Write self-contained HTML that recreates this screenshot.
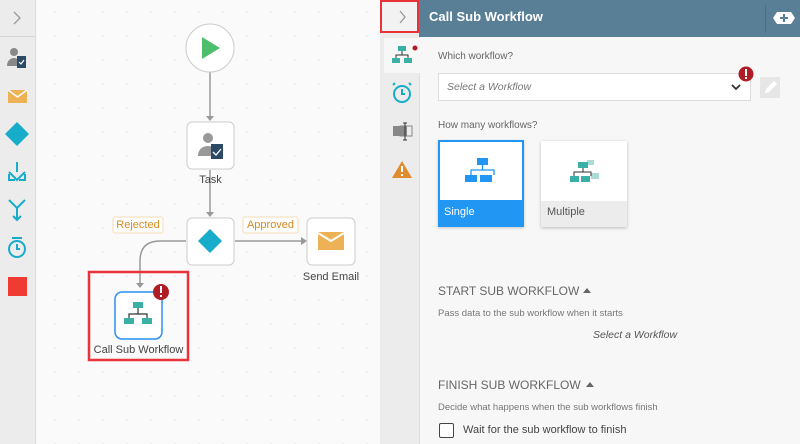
<!DOCTYPE html>
<html><head><style>
*{margin:0;padding:0;box-sizing:border-box}
body{width:800px;height:444px;overflow:hidden;font-family:"Liberation Sans",sans-serif;position:relative;background:#f7f7f7}
.a{position:absolute}
.t{position:absolute;font-size:11px;color:#555;white-space:nowrap}
</style></head><body>
<!-- left toolbar -->
<div class="a" style="left:0;top:0;width:36px;height:444px;background:#ececec;border-right:1px solid #ddd"></div>
<div class="a" style="left:0;top:36px;width:35px;height:1px;background:#d4d4d4"></div>
<svg class="a" style="left:0;top:0" width="36" height="444">
<path d="M14 12l6 6-6 6" stroke="#999" stroke-width="1.3" fill="none"/>
<circle cx="14" cy="52" r="4" fill="#888"/><path d="M7 66c0-6 4-8 7-8s6 2 7 8z" fill="#888"/>
<rect x="17" y="56" width="9" height="12" fill="#2c4a66"/><path d="M19 62l2 2 3-4" stroke="#fff" stroke-width="1.2" fill="none"/>
<path d="M8 90h19v13H8z" fill="#eeb256"/><path d="M8 90l9.5 7 9.5-7" stroke="#fff" stroke-width="1.5" fill="none"/>
<path d="M17 122l12 12-12 12-12-12z" fill="#17acc9"/>
<path d="M17 162v10M9 172l8 8 8-8M9 174v6h6M25 174v6h-6" stroke="#17acc9" stroke-width="2" fill="none"/>
<path d="M9 200l8 8 8-8M17 208v12M13 216l4 4 4-4" stroke="#17acc9" stroke-width="2" fill="none"/>
<circle cx="17" cy="249" r="8" stroke="#17acc9" stroke-width="2" fill="none"/><path d="M17 244v5h3M12 238h10" stroke="#17acc9" stroke-width="2" fill="none"/>
<rect x="8" y="277" width="19" height="19" fill="#ef3b32"/>
</svg>
<!-- canvas -->
<div class="a" style="left:37px;top:0;width:343px;height:444px;background-color:#fafafa;background-image:radial-gradient(#ccc 0.6px,transparent 0.8px);background-size:24px 24px;background-position:6px 0"></div>
<svg class="a" style="left:0;top:0" width="380" height="444">
<path d="M210 72v45M210 170v43M186 241h-26q-20 0-20 20v25M235 241h66" stroke="#999" stroke-width="1.5" fill="none"/>
<path d="M206 116l4 5 4-5zM206 212l4 5 4-5zM136 283l4 5 4-5zM301 237l6 4-6 4z" fill="#999"/>
<circle cx="210" cy="48" r="24" fill="#fff" stroke="#ccc"/>
<path d="M202 37v22l18-11z" fill="#4cbe6c"/>
<rect x="187" y="122" width="47" height="47" rx="5" fill="#fff" stroke="#ccc"/>
<circle cx="208" cy="138" r="5" fill="#999"/><path d="M198 156c0-7 5-10 10-10s8 3 8 5v5z" fill="#999"/>
<rect x="211" y="144" width="12" height="15" fill="#2c4a66"/><path d="M213 152l3 3 5-6" stroke="#fff" stroke-width="1.3" fill="none"/>
<rect x="187" y="218" width="47" height="47" rx="5" fill="#fff" stroke="#ccc"/>
<path d="M210 229l12 12-12 12-12-12z" fill="#17acc9"/>
<rect x="307" y="218" width="48" height="47" rx="5" fill="#fff" stroke="#ccc"/>
<path d="M318 232h26v18h-26z" fill="#eeb256"/><path d="M318 233l13 8 13-8" stroke="#fff" stroke-width="2" fill="none"/>
<rect x="113" y="217" width="50" height="16" rx="2" fill="#fff" stroke="#f6dcb5"/>
<rect x="243" y="217" width="55" height="16" rx="2" fill="#fff" stroke="#f6dcb5"/>
<rect x="89" y="272" width="99" height="88" fill="none" stroke="#e8333a" stroke-width="2.5"/>
<rect x="115" y="292" width="47" height="47" rx="7" fill="#fff" stroke="#2a8ff0" stroke-width="1.5"/>
<rect x="133" y="302" width="10" height="6" fill="#3bb0a6"/><path d="M138 308v6M129 318v-4h18v4" stroke="#333" stroke-width="1.2" fill="none"/>
<rect x="124" y="318" width="10" height="6" fill="#3bb0a6"/><rect x="142" y="318" width="10" height="6" fill="#3bb0a6"/>
<circle cx="161" cy="292" r="8" fill="#b01c25"/><rect x="160" y="286" width="2" height="7" fill="#fff"/><rect x="160" y="295" width="2" height="2" fill="#fff"/>
</svg>
<div class="t" style="left:188px;top:174px;width:45px;text-align:center;color:#444">Task</div>
<div class="t" style="left:113px;top:219px;width:50px;text-align:center;color:#d68a1f">Rejected</div>
<div class="t" style="left:243px;top:219px;width:55px;text-align:center;color:#d68a1f">Approved</div>
<div class="t" style="left:300px;top:271px;width:62px;text-align:center;color:#444">Send Email</div>
<div class="t" style="left:90px;top:344px;width:97px;text-align:center;color:#444">Call Sub Workflow</div>
<!-- right panel -->
<div class="a" style="left:380px;top:0;width:40px;height:444px;background:#ececec;border-right:1px solid #ddd"></div>
<div class="a" style="left:380px;top:0;width:39px;height:33px;background:#f2f2f2;border:2px solid #e8333a"></div>
<svg class="a" style="left:380px;top:0" width="40" height="300">
<path d="M20 11l5 6-5 6" stroke="#999" stroke-width="1.3" fill="none"/>
<rect x="4" y="38" width="36" height="35" fill="#f7f7f7"/>
<rect x="18" y="46" width="8" height="5" fill="#3bb0a6"/><path d="M22 51v4M16 59v-4h12v4" stroke="#333" fill="none"/>
<rect x="12" y="58" width="8" height="5" fill="#3bb0a6"/><rect x="24" y="58" width="8" height="5" fill="#3bb0a6"/>
<circle cx="35" cy="48" r="2.5" fill="#b01c25"/>
<circle cx="22" cy="94" r="8" stroke="#17acc9" stroke-width="2" fill="none"/><path d="M22 89v5h3M15 83l-2 2M29 83l2 2" stroke="#17acc9" stroke-width="2" fill="none"/>
<rect x="13" y="126" width="14" height="10" fill="#888"/><rect x="20" y="126" width="12" height="10" fill="none" stroke="#888"/><path d="M25 123v17M23 123h4M23 140h4" stroke="#333" fill="none"/>
<path d="M22 161l10 17H12z" fill="#e08b2e"/><rect x="21" y="166" width="2" height="6" fill="#fff"/><rect x="21" y="174" width="2" height="2" fill="#fff"/>
</svg>
<div class="a" style="left:419px;top:0;width:381px;height:37px;background:#587f96"></div>
<div class="t" style="left:429px;top:9px;color:#fff;font-size:13px;font-weight:bold">Call Sub Workflow</div>
<div class="a" style="left:765px;top:5px;width:1px;height:28px;background:#4a6d82"></div>
<svg class="a" style="left:772px;top:10px" width="24" height="16"><path d="M5 2h14l4 6-4 6H5l-4-6z" fill="#fff"/><path d="M12 4v8M8 8h8" stroke="#587f96" stroke-width="2"/></svg>
<div class="t" style="left:438px;top:51px;font-size:10px;color:#666">Which workflow?</div>
<div class="a" style="left:438px;top:73px;width:313px;height:28px;background:#fff;border:1px solid #ddd"></div>
<div class="t" style="left:447px;top:81px;font-style:italic;color:#777;font-size:10.5px">Select a Workflow</div>
<svg class="a" style="left:730px;top:82px" width="12" height="10"><path d="M2 3l4 4 4-4" stroke="#333" stroke-width="1.8" fill="none"/></svg>
<svg class="a" style="left:738px;top:66px" width="16" height="16"><circle cx="8" cy="8" r="7.5" fill="#b01c25"/><rect x="7" y="3" width="2" height="7" fill="#fff"/><rect x="7" y="11" width="2" height="2" fill="#fff"/></svg>
<div class="a" style="left:760px;top:77px;width:20px;height:21px;background:#e6e6e6"></div>
<svg class="a" style="left:760px;top:77px" width="20" height="21"><path d="M5 16l1-4 8-8 3 3-8 8z" fill="#fff"/></svg>
<div class="t" style="left:438px;top:120px;font-size:10px;color:#666">How many workflows?</div>
<div class="a" style="left:438px;top:140px;width:86px;height:87px;background:#fff;border:2px solid #2196f3;box-shadow:0 1px 3px rgba(0,0,0,.2)"></div>
<div class="a" style="left:438px;top:200px;width:86px;height:27px;background:#2196f3"></div>
<div class="t" style="left:444px;top:206px;color:#fff;font-size:11px">Single</div>
<svg class="a" style="left:465px;top:157px" width="34" height="28"><rect x="12" y="1" width="11" height="7" fill="#2196f3"/><path d="M17.5 8v5M6 18v-5h23v5" stroke="#2196f3" stroke-width="1.3" fill="none"/><rect x="0" y="18" width="12" height="7" fill="#2196f3"/><rect x="15" y="18" width="12" height="7" fill="#2196f3"/></svg>
<div class="a" style="left:541px;top:141px;width:86px;height:86px;background:#fff;box-shadow:0 1px 3px rgba(0,0,0,.25)"></div>
<div class="a" style="left:541px;top:201px;width:86px;height:26px;background:#ececec"></div>
<div class="t" style="left:547px;top:206px;color:#555;font-size:11px">Multiple</div>
<svg class="a" style="left:568px;top:157px" width="34" height="28"><rect x="19" y="3" width="7" height="5" fill="#a9dcd6"/><rect x="23" y="16" width="8" height="6" fill="#a9dcd6"/><rect x="10" y="5" width="10" height="6" fill="#3bb0a6"/><path d="M15 11v4M6 19v-4h17v4" stroke="#333" fill="none"/><rect x="2" y="19" width="9" height="6" fill="#3bb0a6"/><rect x="13" y="19" width="9" height="6" fill="#3bb0a6"/></svg>
<div class="t" style="left:438px;top:284px;font-size:12px;color:#666">START SUB WORKFLOW</div>
<svg class="a" style="left:582px;top:287px" width="10" height="8"><path d="M1 6l4-5 4 5z" fill="#666"/></svg>
<div class="t" style="left:438px;top:308px;font-size:9.5px;color:#777">Pass data to the sub workflow when it starts</div>
<div class="t" style="left:593px;top:329px;font-size:10.5px;font-style:italic;color:#555">Select a Workflow</div>
<div class="t" style="left:438px;top:378px;font-size:12px;color:#666">FINISH SUB WORKFLOW</div>
<svg class="a" style="left:585px;top:381px" width="10" height="8"><path d="M1 6l4-5 4 5z" fill="#666"/></svg>
<div class="t" style="left:438px;top:402px;font-size:9.5px;color:#777">Decide what happens when the sub workflows finish</div>
<div class="a" style="left:439px;top:423px;width:15px;height:15px;border:1.5px solid #444;border-radius:2px;background:#fff"></div>
<div class="t" style="left:463px;top:424px;font-size:11px;color:#444">Wait for the sub workflow to finish</div>
</body></html>
